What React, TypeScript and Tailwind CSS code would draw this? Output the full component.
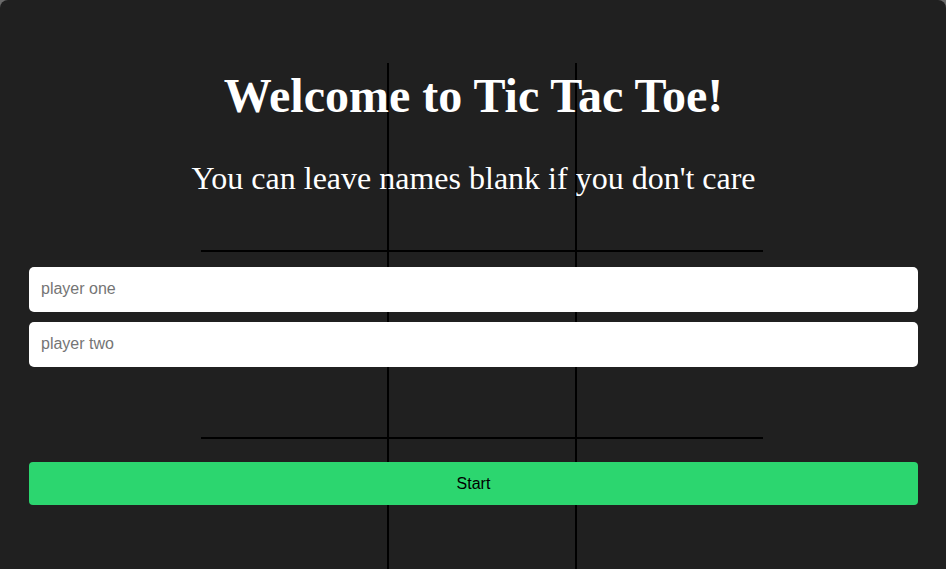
import React from 'react';

function BoardLines() {
  // decorative tic tac toe board drawn behind the form
  return (
    <div className="pointer-events-none absolute left-[201px] top-[63px] h-[562px] w-[562px]">
      <div className="absolute left-[186px] top-0 h-full w-[2px] bg-black" />
      <div className="absolute left-[374px] top-0 h-full w-[2px] bg-black" />
      <div className="absolute left-0 top-[187px] h-[2px] w-full bg-black" />
      <div className="absolute left-0 top-[374px] h-[2px] w-full bg-black" />
    </div>
  );
}

export default function App() {
  return (
    <div className="h-[569px] w-full overflow-hidden bg-[#6b6b6b]">
      <div className="relative h-full w-full overflow-hidden rounded-t-[8px] bg-[#202020]">
        <BoardLines />
        <div className="relative flex flex-col pl-[29px] pr-[28px] pt-[69px]">
          <h1 className="text-center font-['Liberation_Serif',serif] text-[48px] font-bold leading-[53px] text-white">
            Welcome to Tic Tac Toe!
          </h1>
          <h2 className="mt-[38px] text-center font-['Liberation_Serif',serif] text-[32px] leading-[36px] text-white">
            You can leave names blank if you don't care
          </h2>
          <div className="mt-[71px] flex flex-col gap-[10px]">
            <input
              type="text"
              placeholder="player one"
              className="h-[45px] w-full rounded-[5px] bg-white px-[12px] pb-[2px] font-['Liberation_Sans',Arial,sans-serif] text-[16px] leading-[18px] text-black outline-none placeholder:text-[#757575]"
            />
            <input
              type="text"
              placeholder="player two"
              className="h-[45px] w-full rounded-[5px] bg-white px-[12px] pb-[2px] font-['Liberation_Sans',Arial,sans-serif] text-[16px] leading-[18px] text-black outline-none placeholder:text-[#757575]"
            />
          </div>
          <button
            type="button"
            className="mt-[95px] h-[43px] w-full rounded-[4px] bg-[#2cd66f] font-['Liberation_Sans',Arial,sans-serif] text-[16px] text-black"
          >
            Start
          </button>
        </div>
      </div>
    </div>
  );
}
